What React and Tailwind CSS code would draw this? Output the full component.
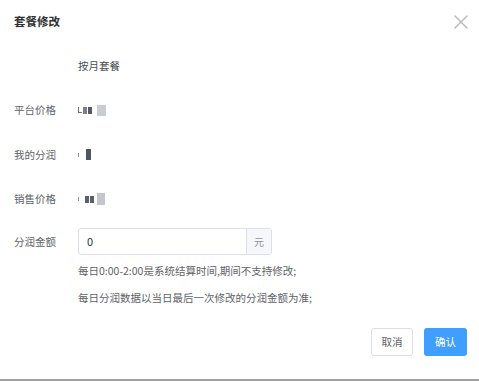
import { X } from 'lucide-react'

const font = { fontFamily: '"Noto Sans CJK SC", "Noto Sans", sans-serif' }

// 打码后的数值，用几块模糊的灰色色块表示
function Masked({ variant }) {
  if (variant === 1) {
    return (
      <div className="flex items-center gap-[1px] blur-[0.6px]">
        <span className="w-[4px] h-[6px] border-l border-b border-[#6b6f78]" />
        <span className="w-[4px] h-[7px] bg-[#7a7e86]" />
        <span className="w-[4px] h-[7px] bg-[#555a63]" />
        <span className="w-[9px] h-[11px] ml-[4px] bg-[#c9ccd2]" />
      </div>
    )
  }
  if (variant === 2) {
    return (
      <div className="flex items-center blur-[0.6px]">
        <span className="w-[1px] h-[4px] bg-[#8a8e96]" />
        <span className="w-[5px] h-[11px] ml-[7px] bg-[#4f545e]" />
      </div>
    )
  }
  return (
    <div className="flex items-center blur-[0.6px]">
      <span className="w-[1px] h-[4px] bg-[#8a8e96]" />
      <span className="w-[4px] h-[7px] ml-[6px] bg-[#5a5f69]" />
      <span className="w-[4px] h-[7px] ml-[1px] bg-[#5a5f69]" />
      <span className="w-[8px] h-[12px] ml-[3px] bg-[#c3c6cc]" />
    </div>
  )
}

function Row({ label, children }) {
  return (
    <div className="h-[44.5px] flex items-center">
      <div className="w-[64px] text-[10.5px] text-[#606266]">{label}</div>
      <div className="flex items-center text-[10.5px] text-[#4a4d52]">{children}</div>
    </div>
  )
}

export default function App() {
  return (
    <div style={font} className="w-[479px] h-[381px] bg-white border-b-2 border-[#a2a2a2] flex flex-col">
      <header className="h-[43.5px] flex items-center justify-between pl-[14px] pr-[6px] flex-shrink-0">
        <h1 className="text-[11.5px] font-bold text-[#303133] leading-none">套餐修改</h1>
        <X className="w-[24px] h-[24px] text-[#b4b7bd]" strokeWidth={1.4} />
      </header>

      <div className="px-[14px] flex flex-col">
        <Row label="">按月套餐</Row>
        <Row label="平台价格"><Masked variant={1} /></Row>
        <Row label="我的分润"><Masked variant={2} /></Row>
        <Row label="销售价格"><Masked variant={3} /></Row>

        <div className="flex items-center mt-[6.5px]">
          <div className="w-[64px] text-[10.5px] text-[#606266]">分润金额</div>
          <div className="w-[194px] h-[27px] flex border border-[#dcdfe6] rounded-[3px] overflow-hidden">
            <div className="flex-1 flex items-center pl-[8px] text-[11px] text-[#303133]">0</div>
            <div className="w-[25px] flex items-center justify-center bg-[#f5f7fa] border-l border-[#dcdfe6] text-[10px] text-[#909399]">元</div>
          </div>
        </div>

        <div className="pl-[64px] text-[10.5px] text-[#606266] leading-[16px]">
          <p className="mt-[7.5px]">每日0:00-2:00是系统结算时间,期间不支持修改;</p>
          <p className="mt-[11px]">每日分润数据以当日最后一次修改的分润金额为准;</p>
        </div>
      </div>

      <div className="flex justify-end gap-[11px] pr-[12px] mt-[22px]">
        <button className="w-[42px] h-[28px] rounded-[3px] border border-[#dcdfe6] bg-white text-[10.5px] text-[#606266]">取消</button>
        <button className="w-[43px] h-[28px] rounded-[3px] bg-[#409eff] text-[10.5px] text-white">确认</button>
      </div>
    </div>
  )
}
